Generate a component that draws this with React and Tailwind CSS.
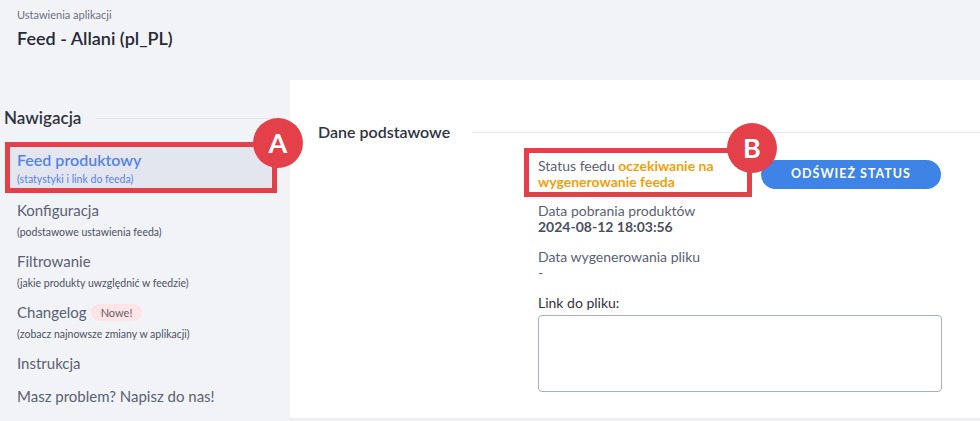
import React from 'react';

const navItems = [
  { title: 'Konfiguracja', sub: '(podstawowe ustawienia feeda)' },
  { title: 'Filtrowanie', sub: '(jakie produkty uwzględnić w feedzie)' },
  { title: 'Changelog', sub: '(zobacz najnowsze zmiany w aplikacji)', badge: 'Nowe!' },
  { title: 'Instrukcja' },
  { title: 'Masz problem? Napisz do nas!' },
];

const Marker = ({ letter, className }) => (
  <div className={`absolute w-[50px] h-[50px] rounded-full bg-[#e3404a] text-white flex items-center justify-center text-[27px] font-bold ${className}`}>
    {letter}
  </div>
);

const App = () => {
  return (
    <div className="w-[980px] h-[421px] overflow-hidden bg-[#f2f3f7] text-[#5a5f74] font-['Lato',sans-serif]">
      <div className="h-[80px] px-[17px] pt-[7px]">
        <p className="text-[11px] text-[#6b6f80] leading-[16px]">Ustawienia aplikacji</p>
        <h1 className="mt-[3px] text-[18px] font-semibold text-[#262a37] leading-[24px]">Feed - Allani (pl_PL)</h1>
      </div>

      <div className="flex h-[341px]">
        <aside className="w-[290px] shrink-0 pr-[17px]">
          <div className="flex items-center pl-[4px] mt-[26px]">
            <h2 className="text-[17px] font-semibold text-[#2f3342] leading-[24px]">Nawigacja</h2>
            <div className="flex-1 h-px bg-[#e3e4ea] ml-[15px]"></div>
          </div>

          <div className="relative mt-[16px] ml-[8px] h-[43px] rounded bg-[#e4e6ef] px-[9px] pt-[3px]">
            <p className="text-[16px] font-semibold text-[#5583e6] leading-[22px]">Feed produktowy</p>
            <p className="text-[10.5px] text-[#5583e6] leading-[16px]">(statystyki i link do feeda)</p>
            <div className="absolute left-[-3px] top-[-4px] w-[272px] h-[51px] border-[5px] border-[#e3404a]"></div>
            <Marker letter="A" className="left-[245px] top-[-28px]" />
          </div>

          <div className="ml-[8px] px-[9px] pt-[10px] flex flex-col">
            {navItems.map((item) => (
              <div key={item.title} className={item.sub ? 'h-[51px]' : 'h-[33px]'}>
                <div className="flex items-center gap-[4px]">
                  <p className="text-[15px] leading-[22px]">{item.title}</p>
                  {item.badge && (
                    <span className="rounded-full bg-[#fde5e7] px-[10px] text-[11px] leading-[17px] text-[#6a5a63]">{item.badge}</span>
                  )}
                </div>
                {item.sub && <p className="text-[10.5px] leading-[16px] mt-[3px] text-[#4c5163]">{item.sub}</p>}
              </div>
            ))}
          </div>
        </aside>

        <main className="flex-1 bg-white border-b-2 border-[#ececef] h-[340px]">
          <div className="flex items-center pl-[28px] mt-[40px]">
            <h2 className="text-[16px] font-semibold text-[#2f3342] leading-[24px]">Dane podstawowe</h2>
            <div className="flex-1 h-px bg-[#e6e7eb] ml-[22px]"></div>
          </div>

          <div className="ml-[248px] mr-[38px] mt-[9px] text-[14px] leading-[16px]">
            <div className="flex items-center gap-[13px]">
              <div className="relative w-[210px] py-[5px]">
                <p>
                  Status feedu <span className="font-bold text-[#f59e0b]">oczekiwanie na wygenerowanie feeda</span>
                </p>
                <div className="absolute left-[-14px] top-[-5px] w-[228px] h-[49px] border-[5px] border-[#e3404a]"></div>
                <Marker letter="B" className="left-[189px] top-[-30px]" />
              </div>
              <button className="w-[180px] h-[29px] rounded-full bg-[#3d84e6] text-white text-[12.5px] font-bold tracking-[1px]">
                ODŚWIEŻ STATUS
              </button>
            </div>

            <div className="mt-[8px]">
              <p>Data pobrania produktów</p>
              <p className="font-bold text-[#4a4f60]">2024-08-12 18:03:56</p>
            </div>
            <div className="mt-[14px]">
              <p>Data wygenerowania pliku</p>
              <p>-</p>
            </div>
            <div className="mt-[14px]">
              <p className="text-[#2f3342]">Link do pliku:</p>
              <textarea className="mt-[4px] block w-[404px] h-[77px] rounded border border-[#a9aec2] resize-none"></textarea>
            </div>
          </div>
        </main>
      </div>
    </div>
  );
};

export default App;
